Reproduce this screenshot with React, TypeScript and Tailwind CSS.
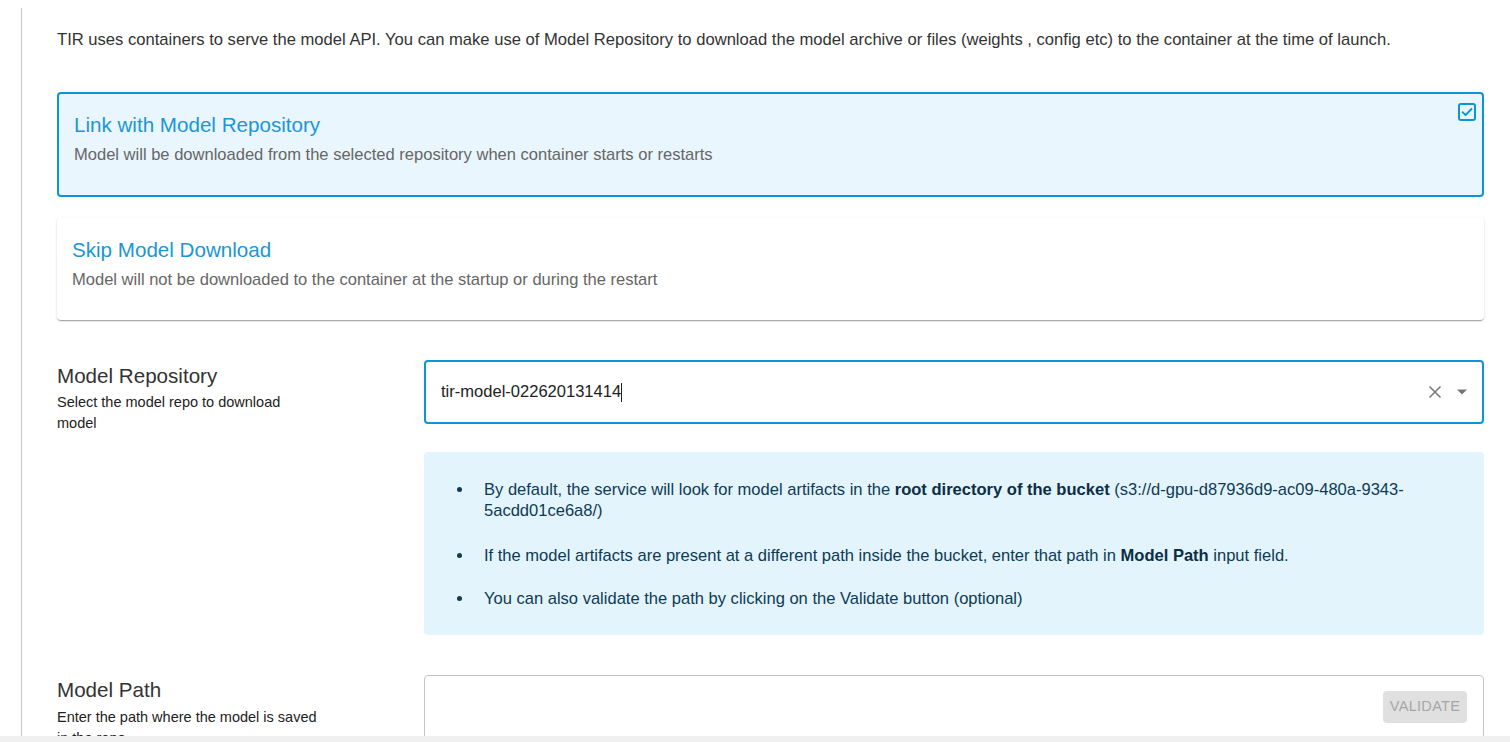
import React from "react";

function CheckIcon() {
  return (
    <svg width="20" height="20" viewBox="0 0 20 20" fill="none">
      <rect x="2" y="2" width="16" height="16" rx="2" stroke="#0a96d6" strokeWidth="2" fill="#eaf6fd" />
      <polyline points="5.5,10.2 8.6,13 14.5,7" stroke="#0a96d6" strokeWidth="1.8" fill="none" strokeLinecap="round" strokeLinejoin="round" />
    </svg>
  );
}

function ClearIcon() {
  return (
    <svg width="14" height="14" viewBox="0 0 14 14">
      <path d="M1.5 1.5 L12.5 12.5 M12.5 1.5 L1.5 12.5" stroke="#757575" strokeWidth="1.5" />
    </svg>
  );
}

function DropIcon() {
  return (
    <svg width="12" height="6" viewBox="0 0 12 6">
      <path d="M1 0.5 L11 0.5 L6 5.5 Z" fill="#757575" />
    </svg>
  );
}

function Bullet() {
  return (
    <span className="w-[27px] shrink-0 flex pt-[8px]">
      <span className="w-[5px] h-[5px] rounded-full bg-[#0e3b55]" />
    </span>
  );
}

export default function App() {
  return (
    <div
      className="relative w-full h-[742px] overflow-hidden bg-white"
      style={{ fontFamily: '"Liberation Sans", Arial, sans-serif' }}
    >
      <div className="ml-[21px] mt-[8px] border-l border-[#c8c8c8] pl-[35px] pr-[26px] pt-[20px] h-[760px]">
        <p className="text-[16.6px] leading-[24px] text-[#333333]">
          TIR uses containers to serve the model API. You can make use of Model Repository to download the model archive or files (weights , config etc) to the container at the time of launch.
        </p>

        <div className="mt-[40px] relative rounded-[4px] border-2 border-[#0a96d6] bg-[#eaf6fd] pl-[15px] pt-[17px] pb-[28px]">
          <div className="text-[20.6px] leading-[28px] text-[#1a96d8]">Link with Model Repository</div>
          <div className="mt-[4px] text-[16.55px] leading-[24px] text-[#666666]">
            Model will be downloaded from the selected repository when container starts or restarts
          </div>
          <div className="absolute top-[8px] right-[5px]">
            <CheckIcon />
          </div>
        </div>

        <div className="mt-[21px] rounded-[4px] bg-white pl-[15px] pt-[18px] pb-[28px] shadow-[0_2px_1px_-1px_rgba(0,0,0,0.2),0_1px_1px_0_rgba(0,0,0,0.14),0_1px_3px_0_rgba(0,0,0,0.12)]">
          <div className="text-[20.6px] leading-[28px] text-[#1a96d8]">Skip Model Download</div>
          <div className="mt-[4px] text-[16.55px] leading-[24px] text-[#666666]">
            Model will not be downloaded to the container at the startup or during the restart
          </div>
        </div>

        <div className="mt-[40px] grid grid-cols-[367px_1fr]">
          <div className="pt-[4px]">
            <div className="text-[20.6px] leading-[24px] text-[#333333]">Model Repository</div>
            <div className="mt-[4px] w-[266px] text-[14.5px] leading-[21px] text-[#222222]">
              Select the model repo to download model
            </div>
          </div>
          <div>
            <div className="h-[64px] rounded-[4px] border-2 border-[#0a96d6] flex items-center pl-[15px] pr-[14px]">
              <span className="text-[16.55px] text-[#222222]">tir-model-022620131414</span>
              <span className="inline-block w-px h-[19px] bg-[#222222]" />
              <div className="flex-1" />
              <div className="flex items-center gap-[14px]">
                <ClearIcon />
                <DropIcon />
              </div>
            </div>
            <div className="mt-[28px] rounded-[4px] bg-[#e3f4fc] pl-[33px] pr-[40px] pt-[27px] pb-[26px] text-[16.55px] leading-[21px] text-[#0e3b55]">
              <div className="flex">
                <Bullet />
                <span>
                  By default, the service will look for model artifacts in the <b className="text-[#0b2e44]">root directory of the bucket</b> (s3://d-gpu-d87936d9-ac09-480a-9343-5acdd01ce6a8/)
                </span>
              </div>
              <div className="flex mt-[24px]">
                <Bullet />
                <span>
                  If the model artifacts are present at a different path inside the bucket, enter that path in <b className="text-[#0b2e44]">Model Path</b> input field.
                </span>
              </div>
              <div className="flex mt-[22px]">
                <Bullet />
                <span>You can also validate the path by clicking on the Validate button (optional)</span>
              </div>
            </div>
          </div>
        </div>

        <div className="mt-[40px] grid grid-cols-[367px_1fr]">
          <div className="pt-[3px]">
            <div className="text-[20.6px] leading-[24px] text-[#333333]">Model Path</div>
            <div className="mt-[5px] w-[266px] text-[14.5px] leading-[21px] text-[#222222]">
              Enter the path where the model is saved in the repo
            </div>
          </div>
          <div className="h-[64px] rounded-[4px] border border-[#c4c4c4] flex items-start justify-end pt-[15px] pr-[16px]">
            <div className="w-[84px] h-[32px] rounded-[4px] bg-[#e0e0e0] flex items-center justify-center text-[14.5px] text-[#a6a6a6] tracking-[0.3px]">
              VALIDATE
            </div>
          </div>
        </div>
      </div>
      <div className="absolute left-0 right-0 bottom-0 h-[6px] bg-[#f0f0f0]" />
    </div>
  );
}
